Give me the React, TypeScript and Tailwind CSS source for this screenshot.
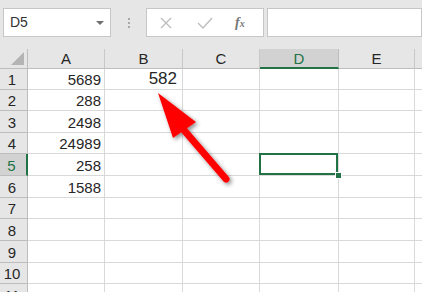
import { Fragment } from "react"

const colNames = ["A", "B", "C", "D", "E", "F"]
const rowHeights = [21, 21, 22, 21, 22, 22, 21, 22, 22, 21, 22]

const data: Record<string, string> = {
    A1: "5689",
    A2: "288",
    A3: "2498",
    A4: "24989",
    A5: "258",
    A6: "1588",
}

const Arrow = () => (
    <svg className="absolute left-0 top-0 pointer-events-none z-20" width="422" height="292" viewBox="0 0 422 292">
        <defs>
            <filter id="sh" x="-20%" y="-20%" width="140%" height="140%">
                <feDropShadow dx="2" dy="2" stdDeviation="2" floodColor="#000" floodOpacity="0.45" />
            </filter>
        </defs>
        <g filter="url(#sh)">
            <line x1="183" y1="129" x2="226" y2="179" stroke="#ff0000" strokeWidth="7" strokeLinecap="round" />
            <polygon points="158,93 173,138 196,122" fill="#ff0000" />
        </g>
    </svg>
)

export default function App() {
    return (
        <div className="relative w-[422px] h-[292px] overflow-hidden bg-white font-['Liberation_Sans',Arial,sans-serif] text-[#262626]">
            {/* formula bar */}
            <div className="h-[49px] bg-[#e6e6e6] flex items-start pt-[8px] pl-[3px]">
                <div className="w-[108px] h-[29px] bg-white border border-[#c6c6c6] flex items-center justify-between pl-[6px] pr-[6px]">
                    <span className="text-[14px] text-[#333]">D5</span>
                    <span className="w-0 h-0 border-l-[4px] border-r-[4px] border-t-[4px] border-l-transparent border-r-transparent border-t-[#707070]" />
                </div>
                <div className="w-[35px] h-[29px] flex flex-col items-center justify-center gap-[2px]">
                    <span className="w-[2px] h-[2px] bg-[#a8a8a8]" />
                    <span className="w-[2px] h-[2px] bg-[#a8a8a8]" />
                    <span className="w-[2px] h-[2px] bg-[#a8a8a8]" />
                </div>
                <div className="w-[118px] h-[29px] bg-white border border-[#c6c6c6] flex items-center">
                    <svg className="ml-[12px]" width="14" height="14" viewBox="0 0 14 14">
                        <path d="M2 2 L12 12 M12 2 L2 12" stroke="#bdbdbd" strokeWidth="1.4" />
                    </svg>
                    <svg className="ml-[24px]" width="16" height="14" viewBox="0 0 16 14">
                        <path d="M1 7 L6 12 L15 2" stroke="#bdbdbd" strokeWidth="1.4" fill="none" />
                    </svg>
                    <span className="ml-[22px] text-[14px] italic font-['Liberation_Serif',serif] text-[#777] font-bold">
                        f<span className="text-[10px]">x</span>
                    </span>
                </div>
                <div className="ml-[3px] flex-1 h-[29px] bg-white border border-[#c6c6c6]" />
            </div>

            {/* sheet */}
            <div
                className="grid grid-cols-[28px_77px_78px_77px_79px_76px_20px]"
                style={{ gridTemplateRows: `20px ${rowHeights.map(h => `${h}px`).join(" ")}` }}
            >
                <div className="relative bg-[#e6e6e6] border-r border-b border-[#bdbdbd]">
                    <svg className="absolute right-[3px] bottom-[3px]" width="13" height="13" viewBox="0 0 13 13">
                        <polygon points="13,0 13,13 0,13" fill="#b4b4b4" />
                    </svg>
                </div>
                {colNames.map(c => (
                    <div
                        key={c}
                        className={
                            c === "D"
                                ? "bg-[#d2d2d2] border-r border-[#bdbdbd] border-b-2 border-b-[#217346] text-[#217346] text-[15px] flex items-center justify-center pt-[2px]"
                                : "bg-[#e6e6e6] border-r border-b border-[#c8c8c8] border-b-[#bdbdbd] text-[15px] flex items-center justify-center pt-[2px]"
                        }
                    >
                        {c === "F" ? "" : c}
                    </div>
                ))}
                {rowHeights.map((_, i) => {
                    const r = i + 1
                    const sel = r === 5
                    return (
                        <Fragment key={r}>
                            <div
                                className={
                                    sel
                                        ? "bg-[#d2d2d2] border-b border-[#bdbdbd] border-r-2 border-r-[#217346] text-[#217346] text-[15px] flex items-center justify-center pt-[3px] pr-[3px]"
                                        : "bg-[#e6e6e6] border-b border-r border-[#bdbdbd] text-[15px] flex items-center justify-center pt-[3px] pr-[3px]"
                                }
                            >
                                {r}
                            </div>
                            {colNames.map(c => {
                                const key = `${c}${r}`
                                return (
                                    <div key={key} className={`relative border-r border-b border-[#d9d9d9] flex items-center justify-end pr-[3px] pt-[3px] text-[15px] ${key === "D5" ? "z-10" : ""}`}>
                                        {data[key]}
                                        {key === "B1" && <span className="text-[17px] -mt-[3px] pr-[2px]">582</span>}
                                        {key === "D5" && (
                                            <>
                                                <span className="absolute -left-[1px] -top-[1px] right-0 bottom-0 border-2 border-[#217346]" />
                                                <span className="absolute -right-[4px] -bottom-[4px] w-[7px] h-[7px] bg-[#217346] border border-white" />
                                            </>
                                        )}
                                    </div>
                                )
                            })}
                        </Fragment>
                    )
                })}
            </div>

            <Arrow />
        </div>
    )
}
